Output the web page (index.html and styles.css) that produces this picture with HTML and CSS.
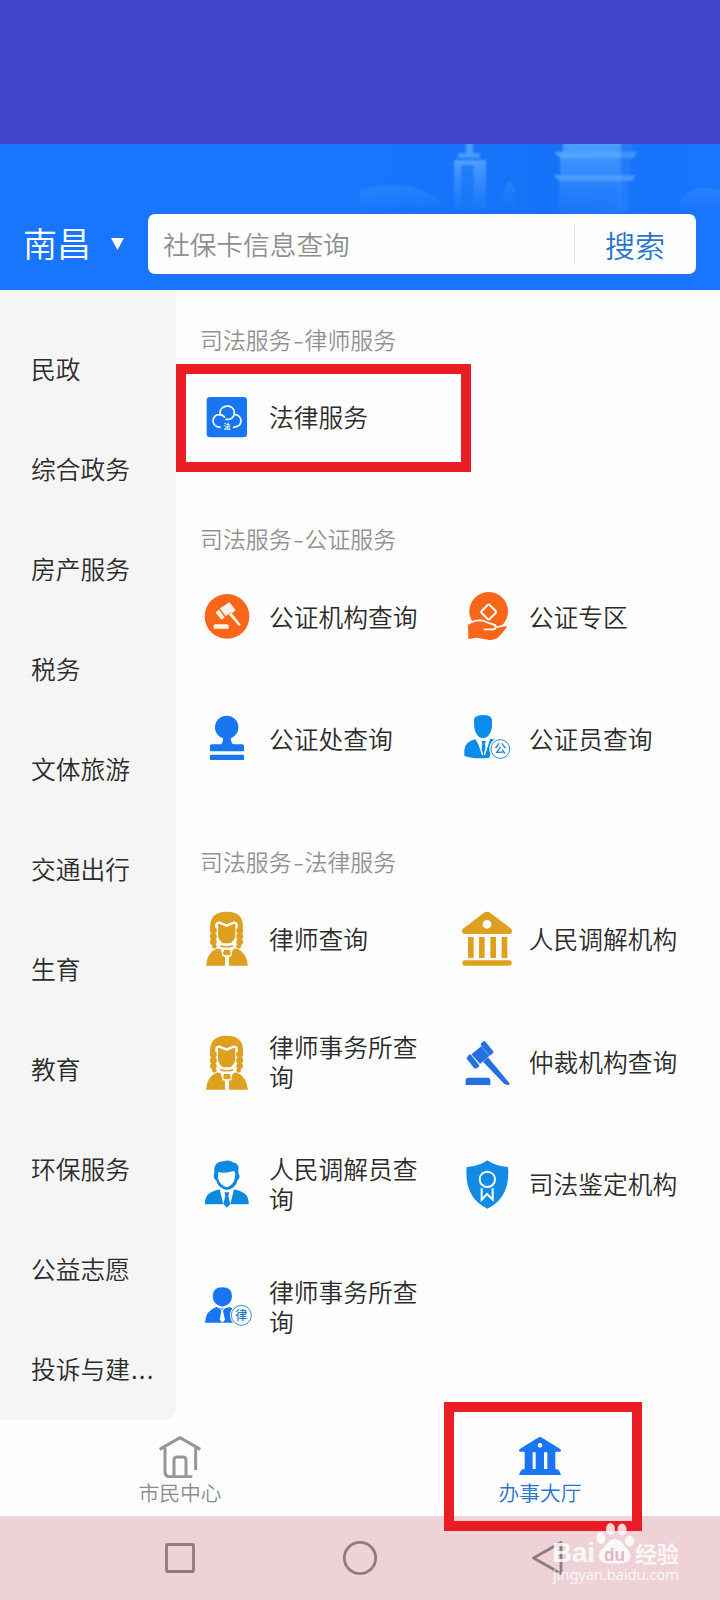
FILE: index.html
```html
<!DOCTYPE html>
<html lang="zh-CN">
<head>
<meta charset="utf-8">
<title>办事大厅</title>
<link rel="stylesheet" href="styles.css">
</head>
<body>
<div class="screen">
  <div class="status"></div>
  <header class="header">
    <svg class="skyline" viewBox="0 0 360 72" width="360" height="72">
      <defs>
        <linearGradient id="fade" x1="0" y1="0" x2="0" y2="1"><stop offset="0" stop-color="#5aa9ff" stop-opacity=".85"/><stop offset="1" stop-color="#3c94ff" stop-opacity=".1"/></linearGradient>
        <linearGradient id="dark" x1="0" y1="0" x2="1" y2="0"><stop offset="0" stop-color="#0f66e8" stop-opacity="0"/><stop offset=".5" stop-color="#0f66e8" stop-opacity=".3"/><stop offset="1" stop-color="#0f66e8" stop-opacity="0"/></linearGradient>
        <linearGradient id="hill" x1="0" y1="0" x2="0" y2="1"><stop offset="0" stop-color="#4a9bff" stop-opacity=".35"/><stop offset="1" stop-color="#4a9bff" stop-opacity="0"/></linearGradient>
        <filter id="soft" x="-5%" y="-5%" width="110%" height="110%"><feGaussianBlur stdDeviation="1"/></filter>
      </defs>
      <rect width="360" height="72" fill="url(#dark)"/>
      <g filter="url(#soft)">
        <path d="M-40 60Q20 32 62 46Q80 54 92 66H-40z" fill="url(#hill)"/>
        <path d="M322 52Q340 38 366 48V68H318z" fill="url(#hill)"/>
        <path d="M106 -4h7v13h7v5H98V9h8z" fill="#59a8ff" opacity=".8"/>
        <path d="M94 16h32v50H94z" fill="url(#fade)"/>
        <path d="M101 21h13v45h-13z" fill="#1677f6" opacity=".75"/>
        <path d="M143 66V46l6-10 7 10v20z" fill="url(#fade)" opacity=".35"/>
        <path d="M203 -4h58v76h-62V38l-6-8 7 1V14l-6-6h9z" fill="url(#fade)"/>
        <path d="M258 -4h14v12h7l-5 6h-4v18h6l-4 6h-4v30h-10z" fill="#418fff" opacity=".3"/>
        <path d="M195 8h82l-4 6h-72zM194 31h82l-4 6h-72z" fill="#79bcff" opacity=".4"/>
      </g>
    </svg>
    <div class="city">南昌</div>
    <svg class="caret" viewBox="0 0 13 12" width="13" height="12"><path d="M0 0h13L6.5 12z" fill="#fff"/></svg>
    <div class="search"><span class="placeholder">社保卡信息查询</span><span class="go">搜索</span></div>
  </header>

  <div class="main">
    <nav class="side">
      <div>民政</div><div>综合政务</div><div>房产服务</div><div>税务</div><div>文体旅游</div><div>交通出行</div><div>生育</div><div>教育</div><div>环保服务</div><div>公益志愿</div><div>投诉与建<span class="dots">...</span></div>
    </nav>
    <div class="content">
      <section>
        <h2>司法服务<i>-</i>律师服务</h2>
        <div class="grid">
          <div class="item">
            <svg viewBox="33 34 156 156"><rect x="50" y="52" width="121" height="121" rx="10" fill="#1876f5"/><g fill="none" stroke="#fff" stroke-width="5" stroke-linecap="round"><path d="M91 143C62 143 62 103 90 105C86 73 132 71 133 98C134 114 121 121 108 119"/><path d="M133 104C159 107 161 139 131 143M90 105Q99 106 103 112"/></g><text x="111" y="148" class="t b" font-size="21" fill="#fff">法</text></svg>
            <span>法律服务</span>
          </div>
        </div>
      </section>
      <section>
        <h2>司法服务<i>-</i>公证服务</h2>
        <div class="grid">
          <div class="item">
            <svg viewBox="33 34 156 156"><circle cx="111" cy="110" r="67" fill="#f9661a"/><g fill="#fff3e8"><path d="M75 134h36q5 0 5 5v8H71v-8q0-5 4-5z"/><path d="M89 86l22-13 16 22-20 15z"/><path d="M79 96l8-6 17 23-7 6q-3 1-5-2L78 101q-1-3 1-5zM107 75l8-6q4-1 6 2l15 19q1 3-2 5l-8 5z"/><path d="M116 104l8-6 27 36q2 5-5 4z"/></g></svg>
            <span>公证机构查询</span>
          </div>
          <div class="item">
            <svg viewBox="812 34 156 156"><circle cx="895" cy="95" r="58" fill="#f9661a"/><rect x="878" y="80" width="34" height="34" rx="4" transform="rotate(45 895 97)" fill="none" stroke="#fff" stroke-width="6"/><path d="M830 135Q855 119 877 123L902 132Q914 135 917 143L940 138Q951 135 953 142Q934 167 922 178Q910 185 894 183L858 177L832 181Z" fill="#f9661a" stroke="#fff" stroke-width="5"/><path d="M882 149h29q9-4 3-14" fill="none" stroke="#fff" stroke-width="5" stroke-linecap="round"/></svg>
            <span>公证专区</span>
          </div>
          <div class="item">
            <svg viewBox="33 402 156 156"><g fill="#1876ef"><circle cx="110" cy="445" r="35"/><path d="M99 470h23q-1 17 7 26h28q5 0 5 5v16H60v-16q0-5 5-5h28q8-9 6-26z"/><rect x="60" y="527" width="102" height="16" rx="3"/></g></svg>
            <span>公证处查询</span>
          </div>
          <div class="item">
            <svg viewBox="812 402 156 156"><g fill="#0b8bea"><path d="M851 430q-4-22 27-22 31 0 27 22 2 29-14 43-13 8-26 0-15-14-14-43z"/><path d="M855 481q-31 7-33 32v17q30 12 75 6l18-54-15-3-16 48z"/><path d="M873 486h14l-3 8 3 26-7 13-7-13 3-26z"/></g><path d="M861 480l16 48M895 480l-13 48" stroke="#fff" stroke-width="4"/><circle cx="930" cy="510" r="33" fill="#fff"/><circle cx="930" cy="510" r="28" fill="#fff" stroke="#2c8bd6" stroke-width="3"/><text x="930" y="523" class="t m" font-size="36" fill="#177fd0">公</text></svg>
            <span>公证员查询</span>
          </div>
        </div>
      </section>
      <section>
        <h2>司法服务<i>-</i>法律服务</h2>
        <div class="grid">
          <div class="item">
            <svg viewBox="33 220 156 156"><g id="judge"><g fill="#dea01f"><path d="M60 264Q59 216 110 216Q161 216 159 264L145 268L142 249L132 245L110 254L87 245L77 249L74 268Z"/><circle cx="70" cy="272" r="10.500"/><circle cx="70" cy="290" r="10.500"/><circle cx="70" cy="307" r="10"/><circle cx="73" cy="320" r="7"/><circle cx="149" cy="272" r="10.500"/><circle cx="149" cy="290" r="10.500"/><circle cx="149" cy="307" r="10"/><circle cx="146" cy="320" r="7"/><path d="M84 253l5 0 21 9 21-9 5 0v37q-3 14-16 21h-20q-13-7-16-21z"/><path d="M91 316q18 7 38 0v5q-18 5-38 0z"/><path d="M83 326l10 4 4 19 8 3v26H48q3-40 35-52zM138 326l-10 4-4 19-7 3v26h57q-4-40-36-52z"/><path d="M102 331h17l4 13-8 3h-9l-7-3z"/></g></g></svg>
            <span>律师查询</span>
          </div>
          <div class="item">
            <svg viewBox="812 220 156 156"><g fill="#dea01f"><path fill-rule="evenodd" d="M883 218q7-4 14 0l62 46q10 8 4 17l-4 2H821q-9-5-5-14zM890 241a13 13 0 1 0 .1 0z"/><path d="M833 292h17v63h-17zM866 292h17v63h-17zM900 292h17v63h-17zM934 292h17v63h-17z"/><rect x="816" y="362" width="148" height="16" rx="7"/></g></svg>
            <span>人民调解机构</span>
          </div>
          <div class="item">
            <svg viewBox="33 217 156 156"><use href="#judge"/></svg>
            <span>律师事务所查询</span>
          </div>
          <div class="item">
            <svg viewBox="812 588 156 156"><g fill="#2470df"><path d="M834 713h58q7 0 8 7v15h-74v-15q1-7 8-7z"/><path d="M843 643l35-28 22 30-31 27z"/><path d="M829 653l6-9q4-3 8 1l23 29q3 4 0 7l-9 5q-4 1-7-3l-21-26q-1-2 0-4zM871 612l7-8q4-3 8 1l22 27q3 4 1 7l-8 7q-4 2-7-2l-22-27q-2-3-1-5z" stroke="#fff" stroke-width="1"/><path d="M878 665l15-13 64 77q3 7-6 6l-9-3z"/></g></svg>
            <span>仲裁机构查询</span>
          </div>
          <div class="item">
            <svg viewBox="33 116 156 156"><g fill="#0d89e0"><path fill-rule="evenodd" d="M73 159Q70 127 101 126Q116 119 131 130Q143 130 146 144L145 159L149 171Q148 181 143 182Q137 208 111 212Q84 207 78 182Q72 180 71 169ZM85 158Q103 163 132 155Q137 159 135 173Q132 197 110 204Q88 197 84 176Z"/><path d="M89 210q-36 8-41 25-4 9-3 20h55zM132 210q36 8 41 25 4 9 3 20h-55z"/><path d="M103 219h15l-3 10 6 25-10 11-11-11 6-25z"/></g></svg>
            <span>人民调解员查询</span>
          </div>
          <div class="item">
            <svg viewBox="812 116 156 156"><path d="M891 123Q916 141 953 143Q961 235 891 268Q821 235 829 143Q866 141 891 123Z" fill="#118be6"/><g fill="none" stroke="#fff" stroke-width="6"><circle cx="891" cy="180" r="23"/><path d="M874 207v34l16-17 17 17v-34"/></g></svg>
            <span>司法鉴定机构</span>
          </div>
          <div class="item">
            <svg viewBox="33 484 156 156"><g fill="#1876f5"><path d="M68 530q0-27 29-27 30 0 29 27-1 27-29 31-28-4-29-31z"/><path d="M79 562q17 9 39 0 16 5 19 13v34H45q1-36 34-47z"/></g><path d="M86 561l10 10 11-10-8 13 6 26-8 9-8-9 5-26z" fill="#fff"/><circle cx="154" cy="587" r="34" fill="#fff"/><circle cx="154" cy="587" r="30" fill="#fff" stroke="#3787d5" stroke-width="3"/><text x="154" y="600" class="t m" font-size="36" fill="#1876d5">律</text></svg>
            <span>律师事务所查询</span>
          </div>
        </div>
      </section>
    </div>
  </div>

  <footer class="tabs">
    <div class="tab">
      <svg viewBox="0 0 126 126" width="42" height="42" fill="none" stroke="#969696" stroke-width="9" stroke-linejoin="round"><path d="M2 40L63 5l61 35M18 36v72q0 14 14 14h68M110 36v66M45 120V72q0-9 9-9h18q9 0 9 9v48"/></svg>
      <span>市民中心</span>
    </div>
    <div class="tab on">
      <svg viewBox="0 0 126 126" width="42" height="42"><path fill="#1876f5" fill-rule="evenodd" d="M0 44Q0 40 7 36L57 5Q63 1 69 5L119 36Q126 40 126 44L124 47H109V99Q119 99 121 105L126 117H0L5 105Q7 99 17 99V47H2ZM63 21a7 7 0 1 0 .1 0zM41 49v50h9V49zM75 49v50h10V49z"/></svg>
      <span>办事大厅</span>
    </div>
  </footer>

  <div class="navbar">
    <svg viewBox="0 0 40 40"><rect x="6.500" y="6.500" width="27" height="27" rx="1" /></svg>
    <svg viewBox="0 0 40 40"><circle cx="20" cy="20" r="15.700"/></svg>
    <svg viewBox="0 0 40 40"><path d="M13.500 20L41 4.500v31z" stroke-linejoin="round"/></svg>
  </div>

  <div class="mark mark-item"></div>
  <div class="mark mark-tab"></div>

  <div class="watermark">
    <svg viewBox="0 0 140 70" width="140" height="70">
      <g fill="#fff" fill-opacity=".82">
        <ellipse cx="52" cy="23" rx="4.500" ry="6"/><ellipse cx="61.500" cy="14" rx="4.500" ry="6"/><ellipse cx="73" cy="14.500" rx="4.500" ry="6"/><ellipse cx="80.500" cy="26" rx="4.500" ry="5.500"/>
        <path d="M66 24q5 0 8 5l6 7q4 9-4 12-9 1-20 0-9-3-5-12l7-7q3-5 8-5z"/>
        <text x="3" y="47" class="w" font-size="28" textLength="43" lengthAdjust="spacingAndGlyphs">Bai</text>
        <text x="86" y="47" class="w cjk" font-size="22" textLength="44">经验</text>
        <text x="4" y="65" class="url" font-size="15" textLength="126">jingyan.baidu.com</text>
      </g>
      <text x="55" y="46" class="w" font-size="18" fill="#dfb9c2" textLength="21" lengthAdjust="spacingAndGlyphs">du</text>
    </svg>
  </div>
</div>
</body>
</html>
```
FILE: styles.css
```css
* { box-sizing: border-box; }
body { margin: 0; font-family: "Noto Sans CJK SC", sans-serif; font-weight: 350; color: #2c2c2c; background: #fff; }
.screen { position: relative; width: 720px; height: 1600px; overflow: hidden; display: flex; flex-direction: column; background: #fefefe; }
.status { height: 144px; background: #3f46cc; flex: none; }

.header { position: relative; height: 146px; flex: none; display: flex; align-items: flex-start; padding: 70px 24px 0 23px; background: #1876fe; }
.skyline { position: absolute; right: 0; top: 0; }
.city { width: 88px; height: 60px; line-height: 58px; font-size: 34px; color: #fff; }
.caret { margin-top: 24px; }
.search { position: relative; margin-left: 24px; width: 548px; height: 60px; border-radius: 7px; background: #fefefe; display: flex; align-items: center; justify-content: space-between; }
.placeholder { padding-left: 15px; font-size: 26.7px; color: #8f8f8f; line-height: 60px; flex: 1; }
.go { width: 122px; height: 40px; border-left: 1px solid #e6e6e6; padding-left: 30px; font-size: 30px; line-height: 40px; color: #2874cf; }

.main { display: flex; height: 1130px; flex: none; }
.side { width: 176px; padding: 28px 0 0 31px; background: #f5f5f5; border-bottom-right-radius: 12px; font-size: 24.75px; line-height: 100px; white-space: nowrap; }
.side div { height: 100px; }
.dots { letter-spacing: 1.2px; margin-left: 1px; }
.content { padding: 32.5px 0 0 24px; }
section { margin-bottom: 45px; }
h2 { margin: 0; height: 32px; line-height: 32px; font-size: 22.9px; font-weight: 350; color: #929292; }
h2 i { display: inline-block; width: 13px; text-align: center; font-style: normal; transform: scaleX(1.35); }
.grid { display: grid; grid-template-columns: 259.7px 240px; grid-auto-rows: 122.7px; }
.item { display: flex; align-items: center; gap: 16px; padding-left: 1px; font-size: 24.75px; line-height: 30px; }
.item svg { width: 52px; height: 52px; flex: none; overflow: visible; margin-top: 2px; }
.item span { width: 155px; }
.t { text-anchor: middle; font-family: "Noto Sans CJK SC", sans-serif; }
.b { font-weight: 700; }
.m { font-weight: 500; }

.tabs { height: 96px; flex: none; display: flex; }
.tab { width: 360px; display: flex; flex-direction: column; align-items: center; padding-top: 16px; font-size: 20.8px; line-height: 28px; color: #8c8c8c; }
.tab.on { color: #2874cf; }

.navbar { flex: 1; display: flex; justify-content: space-between; align-items: center; padding: 0 160px; background: #eed2d8; }
.navbar svg { width: 40px; height: 40px; fill: none; stroke: #8d7d81; stroke-width: 2.8; overflow: visible; }

.mark { position: absolute; border: 10px solid #ea1c24; }
.mark-item { left: 176px; top: 364px; width: 295px; height: 108px; }
.mark-tab { left: 444px; top: 1402px; width: 198px; height: 129px; }

.watermark { position: absolute; left: 549px; top: 1515px; width: 140px; height: 70px; }
.w { font-family: "Liberation Sans", Arial, sans-serif; font-weight: 700; }
.cjk { font-family: "Noto Sans CJK SC", sans-serif; }
.url { font-family: "Noto Sans", sans-serif; font-weight: 400; }
```
